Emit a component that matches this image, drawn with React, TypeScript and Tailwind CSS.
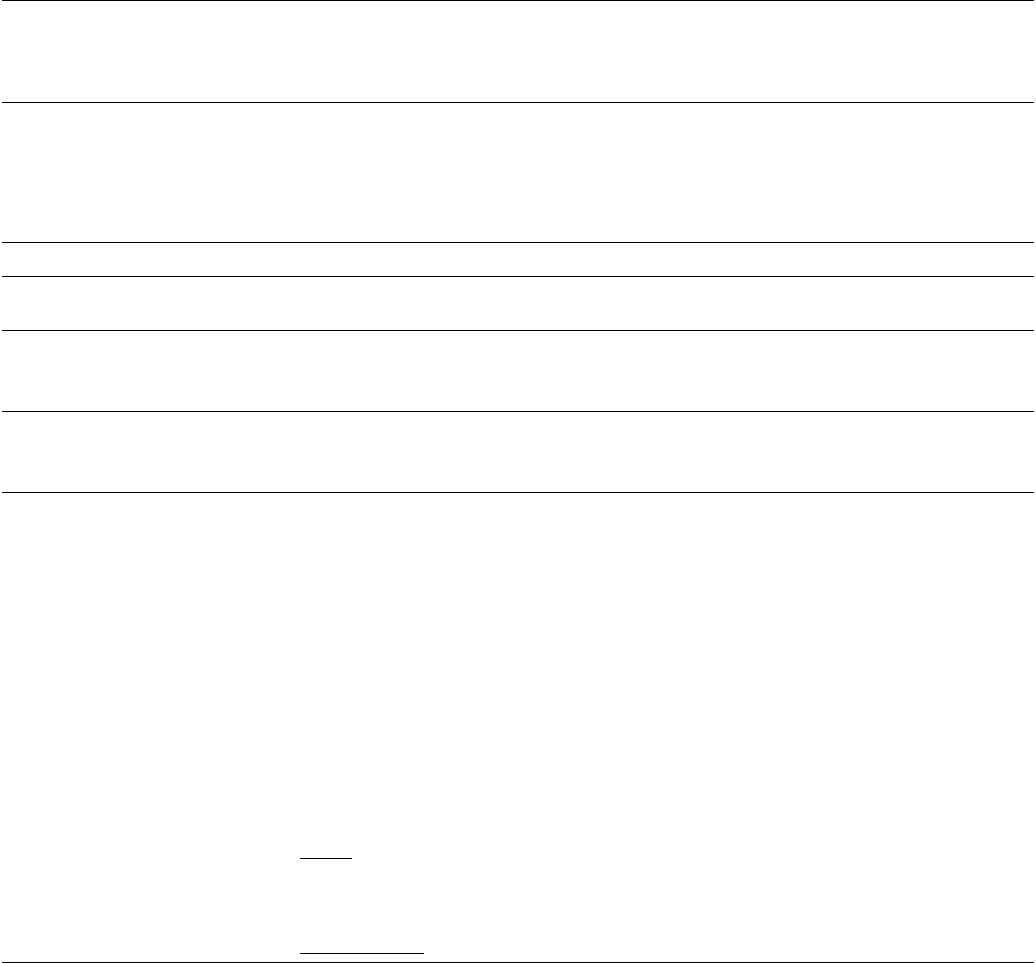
import React from 'react';

const rows = ['h-[140px]', 'h-[34px]', 'h-[54px]', 'h-[81px]', 'h-[81px]'];

const App: React.FC = () => {
  return (
    <div className="min-h-screen bg-white font-['Liberation_Sans',sans-serif]">
      <div className="mx-[2px]">
        {/* Header block */}
        <div className="h-[103px] border-y border-black" />

        {/* Middle rows */}
        {rows.map((h, idx) => (
          <div key={idx} className={`${h} border-b border-black`} />
        ))}

        {/* Bottom block with two underline fields */}
        <div className="h-[470px] border-b border-black flex flex-col pl-[298px] pt-[365px]">
          <div className="w-[52px] h-px bg-black" />
          <div className="w-[124px] h-px bg-black mt-[94px]" />
        </div>
      </div>
    </div>
  );
};

export default App;
